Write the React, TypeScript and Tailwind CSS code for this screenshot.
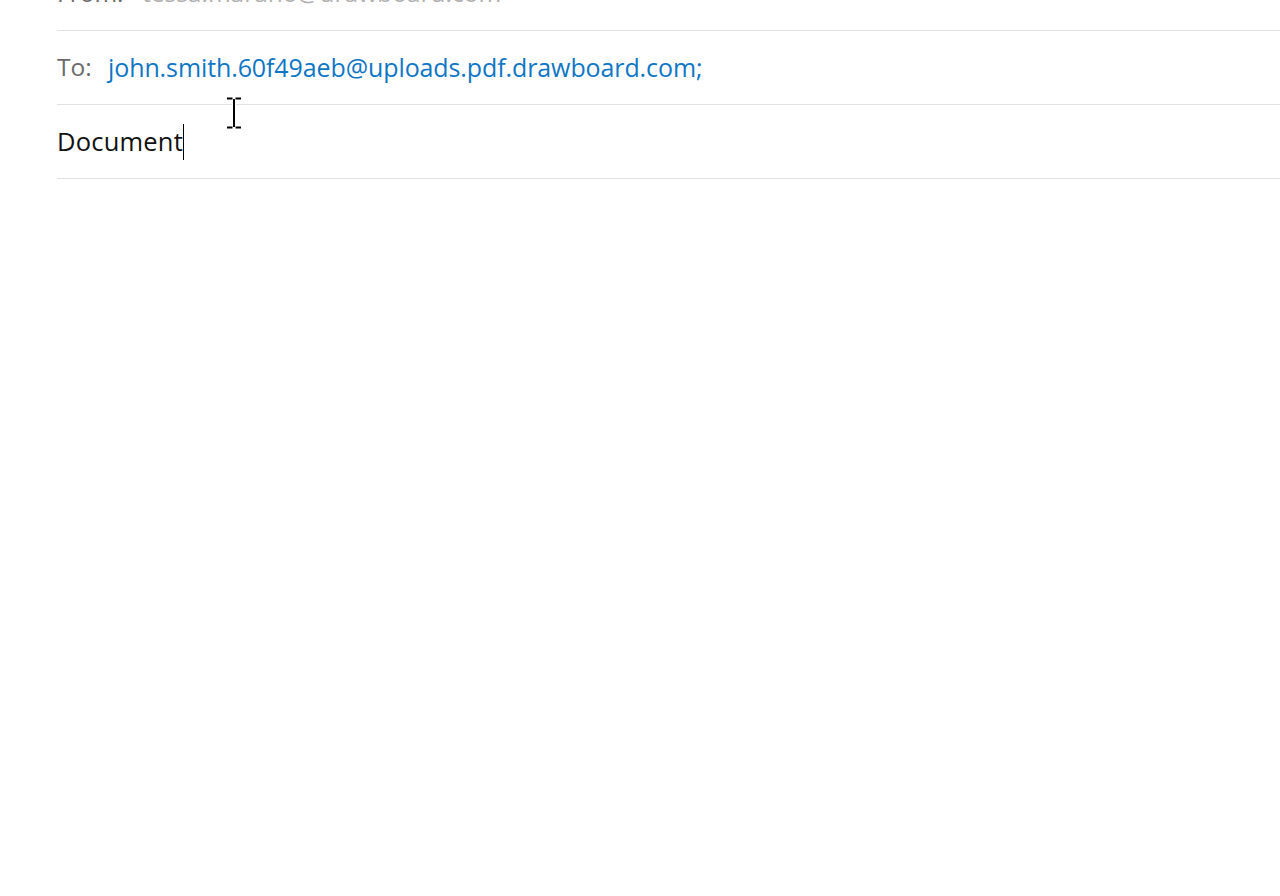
const rowLine = 'border-b border-[#e1e1e1]';

function Caret() {
  return <span className="inline-block w-px h-[36px] bg-black align-middle" />;
}

function IBeam() {
  // mouse text-selection cursor drawn over the subject field
  return (
    <svg
      className="absolute left-[224px] top-[96px]"
      width="20"
      height="34"
      viewBox="0 0 20 34"
      fill="none"
    >
      <path d="M3 2.5h5.5M11.5 2.5H17M10 3v28M3 31.5h5.5M11.5 31.5H17" stroke="#fff" strokeWidth="4" />
      <path d="M3 2.5h5.5M11.5 2.5H17M10 3v28M3 31.5h5.5M11.5 31.5H17" stroke="#000" strokeWidth="2" />
    </svg>
  );
}

export default function App() {
  return (
    <div
      className="relative w-[1280px] h-[896px] overflow-hidden bg-white"
      style={{ fontFamily: '"Open Sans", "Noto Sans", sans-serif' }}
    >
      <div className="mt-[-44px] ml-[57px]">
        <div className={`h-[75px] flex items-center text-[24.5px] ${rowLine}`}>
          <span className="w-[85px] text-[#6b6b6b]">From:</span>
          <span className="text-[#b0b0b0]">tessa.marano@drawboard.com</span>
        </div>
        <div className={`h-[74px] flex items-center text-[24.5px] ${rowLine}`}>
          <span className="w-[51px] text-[#6b6b6b]">To:</span>
          <span className="text-[25px] text-[#0f76c5] tracking-[-0.1px]">john.smith.60f49aeb@uploads.pdf.drawboard.com;</span>
        </div>
        <div className={`h-[74px] flex items-center text-[25.5px] text-[#111] ${rowLine}`}>
          <span className="tracking-[0.2px]">Document</span>
          <Caret />
        </div>
      </div>
      <IBeam />
    </div>
  );
}
